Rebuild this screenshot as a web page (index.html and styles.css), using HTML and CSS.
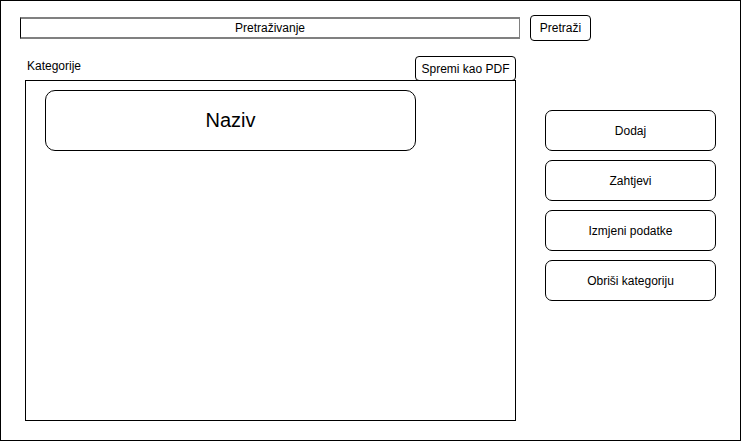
FILE: index.html
```html
<!DOCTYPE html>
<html lang="hr">
<head>
<meta charset="utf-8">
<title>Kategorije</title>
<link rel="stylesheet" href="styles.css">
</head>
<body>
<div class="frame">
  <div class="top">
    <div class="search">Pretraživanje</div>
    <div class="btn btn-search">Pretraži</div>
  </div>
  <div class="main">
    <div class="left">
      <div class="head">
        <div class="label">Kategorije</div>
        <div class="btn pdf">Spremi kao PDF</div>
      </div>
      <div class="panel">
        <div class="card">Naziv</div>
      </div>
    </div>
    <div class="right">
      <div class="btn rbtn">Dodaj</div>
      <div class="btn rbtn">Zahtjevi</div>
      <div class="btn rbtn">Izmjeni podatke</div>
      <div class="btn rbtn">Obriši kategoriju</div>
    </div>
  </div>
</div>
</body>
</html>
```
FILE: styles.css
```css
html, body {
  margin: 0;
  padding: 0;
  background: #fff;
}
body {
  font-family: "Liberation Sans", Arial, sans-serif;
  font-size: 12px;
  color: #000;
}
.frame {
  width: 741px;
  height: 441px;
  box-sizing: border-box;
  border: 1px solid #000;
  padding: 14px 0 0 19px;
}
.top {
  display: flex;
  align-items: center;
  height: 26px;
}
.search {
  width: 500px;
  height: 22px;
  box-sizing: border-box;
  border-top: 2px solid #808080;
  border-bottom: 2px solid #808080;
  border-left: 1px solid #000;
  border-right: 1px solid #808080;
  display: flex;
  align-items: center;
  justify-content: center;
  font-size: 12px;
}
.btn {
  box-sizing: border-box;
  border: 1px solid #000;
  display: flex;
  align-items: center;
  justify-content: center;
  background: #fff;
}
.btn-search {
  margin-left: 10px;
  width: 61px;
  height: 26px;
  border-radius: 4px;
}
.main {
  display: flex;
  margin-top: 15px;
  padding-left: 5px;
}
.left {
  width: 491px;
  display: flex;
  flex-direction: column;
}
.head {
  display: flex;
  justify-content: space-between;
  height: 24px;
}
.label {
  padding-left: 2px;
  margin-top: 3px;
  line-height: 14px;
}
.pdf {
  width: 101px;
  height: 25px;
  border-radius: 4px;
}
.panel {
  height: 341px;
  box-sizing: border-box;
  border: 1px solid #000;
  padding: 9px 0 0 19px;
}
.card {
  width: 371px;
  height: 61px;
  box-sizing: border-box;
  border: 1px solid #000;
  border-radius: 10px;
  display: flex;
  align-items: center;
  justify-content: center;
  font-size: 20px;
}
.right {
  margin-left: 29px;
  padding-top: 54px;
  display: flex;
  flex-direction: column;
  gap: 9px;
}
.rbtn {
  width: 171px;
  height: 41px;
  border-radius: 7px;
}
```
